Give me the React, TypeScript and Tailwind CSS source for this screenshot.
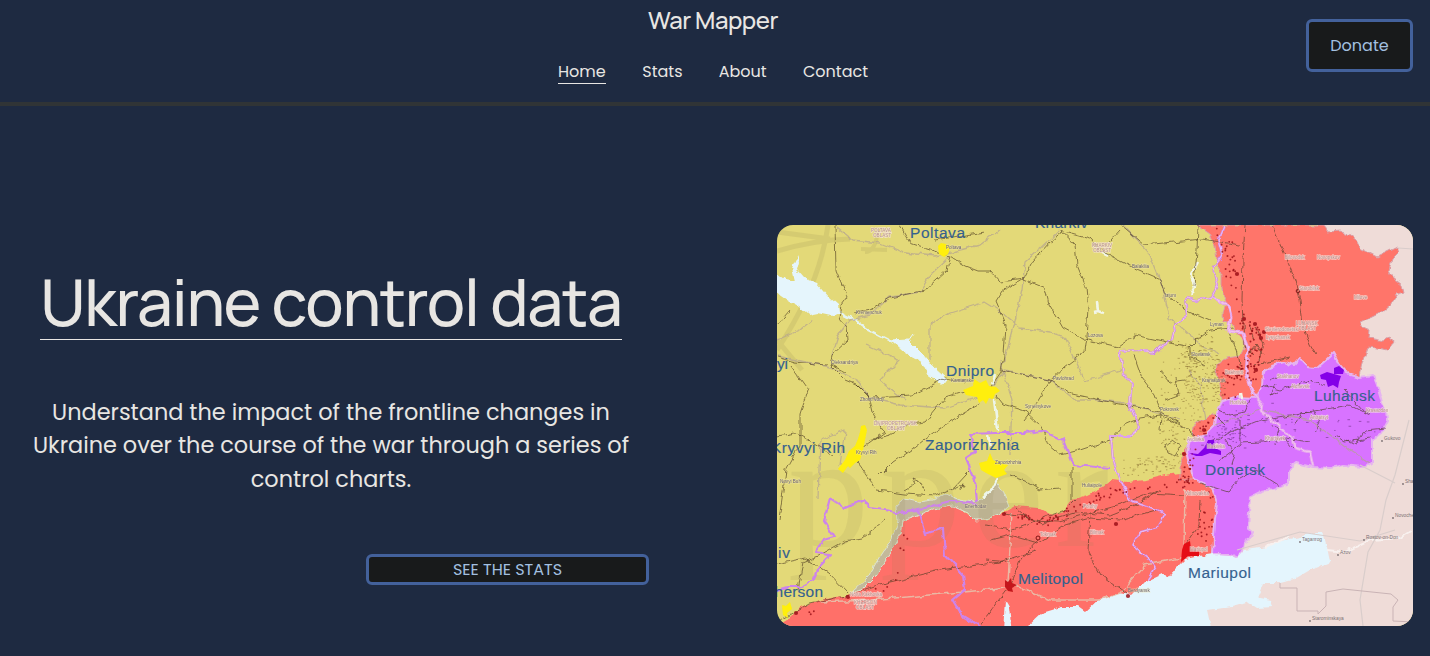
import React from "react";

const BODY = "font-['Poppins','Inter',sans-serif]";
const HEAD = "font-['Manrope','Inter',sans-serif] font-medium";

const NORTH_RED =
  "1197,225 1325,225 1328,232 1340,231 1350,235 1356,240 1360,248 1377,257 1385,253 1397,247 1399,253 1392,260 1389,269 1392,277 1402,285 1404,293 1397,295 1390,305 1382,312 1372,317 1361,322 1363,327 1370,330 1369,338 1383,341 1390,337 1393,342 1387,350 1378,348 1368,347 1363,362 1360,377 1340,385 1262,400 1240,420 1205,480 1180,480 1180,463 1186,450 1192,438 1193,427 1204,419 1217,413 1222,400 1221,384 1216,375 1217,363 1227,358 1240,356 1244,348 1243,340 1236,332 1232,324 1224,322 1223,314 1226,302 1222,290 1222,275 1217,260 1215,246 1210,234";
const SOUTH_RED =
  "1205,425 1193,440 1182,453 1180,473 1165,475 1145,480 1128,482 1112,480 1102,488 1088,495 1072,500 1063,512 1052,515 1038,508 1015,506 1004,512 985,520 970,515 952,505 933,508 917,515 903,519 900,533 890,553 873,577 860,590 847,595 820,600 800,607 787,620 770,630 1040,636 1150,600 1190,565 1215,556 1220,480";
const PURPLE =
  "1263,372 1272,366 1284,362 1294,365 1300,358 1307,367 1317,368 1325,361 1333,353 1339,364 1347,373 1360,377 1373,375 1377,385 1382,402 1387,412 1388,420 1381,433 1372,440 1372,463 1363,467 1343,465 1330,468 1313,467 1297,463 1288,470 1288,485 1277,488 1262,491 1250,497 1248,528 1253,532 1250,539 1244,543 1243,549 1238,558 1230,554 1213,554 1215,520 1217,503 1212,488 1203,483 1194,480 1190,465 1187,452 1190,440 1205,435 1215,425 1218,408 1222,401 1235,397 1257,398 1262,385";
const RUSSIA =
  "1310,215 1325,232 1350,245 1372,266 1380,275 1388,292 1350,322 1345,370 1360,400 1370,440 1350,455 1290,455 1270,475 1240,490 1235,530 1225,540 1200,605 1212,636 1425,636 1425,215";
const SEA =
  "1028,626 1042,613 1062,607 1078,607 1085,612 1098,600 1118,593 1132,595 1145,582 1162,574 1168,578 1176,568 1185,559 1200,556 1213,554 1230,555 1237,558 1245,550 1267,547 1280,541 1300,537 1308,533 1323,533 1327,547 1330,562 1310,570 1293,580 1280,583 1263,583 1257,597 1271,600 1273,607 1257,608 1248,602 1233,607 1207,610 1212,632 1028,632";
const RESERVOIR =
  "995,480 1004,492 1009,506 1000,514 985,519 975,520 968,513 952,506 933,509 917,516 903,521 901,533 890,553 875,577 862,590 852,592 868,577 880,556 892,538 898,522 897,505 905,499 918,502 933,500 945,494 960,500 972,502 982,500 990,492";
const NW_LAKE =
  "770,270 777,273 785,279 795,281 792,268 798,255 799,262 797,270 804,278 817,283 829,297 838,305 839,313 832,316 818,313 808,315 799,307 787,300 770,288";

const DARK_ROADS = [
  "835,225 836,270 847,297 841,305 839,318 847,327 848,340 832,355 830,365 845,380 857,385 870,398 912,396 945,378 965,382",
  "900,225 910,243 940,253 950,256 947,270 925,290 890,298 870,310 855,313",
  "950,256 965,266 978,271 990,271 1000,282 1023,279 1045,288 1049,304 1063,328 1083,339 1118,347",
  "1060,230 1075,244 1077,265 1086,287 1088,310 1086,337 1084,352 1064,367 1050,382 1034,407 1024,420",
  "1120,225 1144,245 1202,239 1240,245",
  "1060,230 1090,238 1104,253 1132,267 1160,279 1165,295 1190,312 1210,321",
  "1120,230 1104,248 M1198,225 1197,250 1194,285",
  "1063,231 1050,242 1032,262 1024,278 1003,291 996,302 1006,325 1004,355 1001,372 990,388",
  "1002,370 1050,380 1072,394 1100,400 1160,412 1180,424",
  "1118,347 1135,335 1190,347 1197,340 1210,330 1233,328",
  "1134,355 1142,378 1155,395 1161,412 1160,432",
  "777,357 795,362 826,365 M791,366 808,390 800,415 800,445 786,470 779,520",
  "857,385 868,395 872,412 885,432 860,450 M830,364 845,372",
  "855,460 877,490 905,494 935,496 955,487 966,475 971,470",
  "869,440 890,435 905,425 925,422 945,398 970,390",
  "880,475 893,462 915,447 930,435 945,425 965,412 980,404",
  "905,490 915,484 912,478 919,481 925,491 M955,488 963,484 960,491",
  "777,436 795,433 815,444 833,455",
  "886,519 862,538 845,541 820,555 803,562 798,590",
  "777,564 805,558 828,572 848,593 M780,620 810,603 850,595 890,582 940,570 1000,562 1036,550",
  "996,395 1003,404 1025,411 1041,426 1048,445 1060,455 1080,450 1110,440 1124,425 1140,418 1160,415",
  "1016,508 1030,520 1060,521 1090,513 1120,505 1150,493 1184,495",
  "985,525 1010,530 1035,521 1065,510 1075,500 M990,540 1010,535 1038,543 1065,525 1090,518 1120,520 1155,510",
  "1005,513 1025,516 1043,524 1055,518 1075,512 1110,515 1135,505 1160,490",
  "1090,511 1088,552 1101,575 1127,594 M1011,585 1020,560 1038,540",
  "985,560 1010,562 M979,626 1008,588 M1200,500 1199,525 1183,549",
  "1272,225 1285,255 1295,280 1300,300 1303,325 1310,345 1316,355",
  "1245,225 1243,260 1242,300 1244,345 1253,355 M1255,365 1290,357",
  "1215,440 1235,430 1260,420 1290,415 1320,410 1350,405 1370,415",
  "1200,483 1228,492 1240,478 1255,470 M1255,470 1280,486 M1240,420 1240,445 1220,460",
  "1262,385 1280,390 1310,380 1325,385 M1345,390 1365,412 1385,410",
  "1240,443 1262,442 1285,438 1310,442 M1275,445 1280,430 1272,425 M1285,440 1292,448",
  "1295,425 1302,413 1315,412 1320,422 1315,432 M1345,440 1355,445 1365,430 1385,428",
  "1225,440 1235,455 1232,465 M1218,410 1230,415 1245,412 1250,400 M1225,425 1215,415",
  "1335,435 1345,442 1358,440 1370,438 M1275,385 1270,395 1278,392 M1270,380 1280,375",
  "777,325 790,310 M935,240 985,232",
  "1190,346 1190,360 M1160,370 1170,382 1185,380 M1188,355 1205,365",
  "1160,415 1185,428 1195,436 M1175,378 1178,395 1165,400",
  "1165,445 1172,440 1180,446 1175,455 1167,452 Z",
  "1244,360 1256,345 1262,355 M1240,370 1236,350 1228,330",
  "1256,326 1264,345 1258,362 M1248,322 1255,340",
  "1010,475 1025,480 1040,490 1060,488 M1072,468 1072,500",
];
const GREY_ROADS = [
  "837,228 852,240 880,243 905,253 935,256 952,252 980,245 1000,230",
  "950,256 930,275 920,292 890,297 870,315 850,320 838,335 832,355",
  "777,356 830,367 857,380 870,398 900,405 945,408 985,395 1005,370",
  "1005,370 1050,380 1075,400 1100,400 1125,403 1180,420",
  "1060,230 1025,262 1022,290 1015,320 1003,365",
  "1123,225 1150,255 1162,285 1170,318 1200,345 1220,355",
  "930,360 930,325 950,313 985,302 998,310 1020,328 1050,332 1065,337 1080,370 1085,381 1095,378 1120,370",
  "777,340 800,330 812,320 M865,345 900,360 880,380 905,400",
  "840,465 845,430 820,440 818,500",
  "1187,370 1200,385 1205,420",
  "1215,425 1260,410 1310,420 1350,450 1370,463",
  "1000,360 1012,400 1010,455",
];
const PALE_ROADS = [
  "985,590 1015,585 1050,600 1100,600 1120,593 1145,565 1190,556",
  "1185,490 1184,545 M1008,582 1012,512",
  "820,602 870,600 930,595 985,590",
];
const PURPLE_BORDERS = [
  "1224,225 1218,240 1222,255 1213,268 1217,285 1212,297 1205,299 1195,300 1186,298 1188,315 1175,325 1172,340 1160,347 1155,352 1145,351 1140,350 1120,351 1123,374 1132,382 1130,405 1138,425 1132,436 1111,436 1113,460 1122,485 1130,500 1150,507 1165,515 1158,527 1140,532 1133,545 1150,560 1155,568 1147,580",
  "1213,297 1228,305 1231,317 1228,331 1243,333 1248,350 1246,373 1253,393 1262,403 1261,411 1275,422 1292,438 1295,448 1310,452 1313,466",
  "977,502 975,480 966,458 975,452 970,434 995,433 1025,433 1042,431 1063,440 1073,465 1110,468",
  "777,590 787,587 800,587 813,580 820,565 830,555 815,553 823,540 834,537 824,520 830,498 845,508 863,500 870,508 898,512 918,510 925,534 943,528 945,555 963,575 965,590 953,600 962,615 980,626",
  "898,512 925,508 950,501 977,504",
];

const YELLOW_CITIES = [
  "938,246 941,243 946,244 950,248 948,254 944,257 939,254",
  "963,390 973,386 974,379 980,383 986,380 989,386 996,387 1000,391 995,394 993,399 989,398 986,404 983,400 979,403 977,397 966,395",
  "860,432 861,426 865,425 867,430 865,440 863,450 860,460 855,463 850,468 848,466 843,473 838,469 845,460 849,451 855,446 858,439",
  "979,463 987,461 990,453 993,460 1000,463 1008,465 1004,470 1007,474 996,478 988,474 981,470",
  "782,605 786,606 790,602 792,609 787,613 788,618 783,615",
];

const LABELS: [string, number, number, number][] = [
  ["Poltava", 910, 238, 55],
  ["Kharkiv", 1035, 228, 53],
  ["Dnipro", 946, 376, 48],
  ["Kryvyi Rih", 771, 453, 74],
  ["Zaporizhzhia", 925, 450, 94],
  ["Luhansk", 1314, 401, 61],
  ["Donetsk", 1205, 475, 60],
  ["Melitopol", 1018, 584, 65],
  ["Mariupol", 1188, 578, 63],
  ["Kherson", 764, 597, 59],
  ["yi", 777, 369, 11],
  ["iv", 778, 558, 12],
];

const DARK_TOWNS: [string, number, number][] = [
  ["Poltava", 946, 249], ["Kremenchuk", 856, 314], ["Oleksandriya", 831, 364], ["Zhovti Vody", 860, 401],
  ["Kamianske", 951, 382], ["Pavlohrad", 1053, 380], ["Lozova", 1088, 337], ["Izium", 1165, 297],
  ["Balakliia", 1132, 268], ["Synelnykove", 1025, 408], ["Kryvyi Rih", 856, 454], ["Pokrovsk", 1160, 411],
  ["Huliaipole", 1082, 487], ["Novyi Buh", 780, 483], ["Enerhodar", 965, 508], ["Berdyansk", 1128, 592],
  ["Kramatorsk", 1202, 382], ["Sloviansk", 1191, 356], ["Lyman", 1210, 326], ["Zaporizhzhia", 995, 464],
];
const PALE_TOWNS: [string, number, number][] = [
  ["POLTAVA", 871, 232], ["OBLAST", 873, 237], ["KHARKIV", 1092, 247], ["OBLAST", 1093, 252],
  ["DNIPROPETROVSK", 874, 425], ["OBLAST", 887, 430], ["LUHANSK", 1296, 325], ["OBLAST", 1298, 330],
  ["KHERSON", 854, 604], ["OBLAST", 856, 609], ["Sievierodonetsk", 1265, 331], ["Lysychansk", 1266, 339],
  ["Bilovodsk", 1285, 259], ["Novopskov", 1317, 259], ["Starobilsk", 1299, 290], ["Milove", 1354, 299],
  ["Alchevsk", 1291, 388], ["Stakhanov", 1277, 378], ["Krasnodon", 1366, 412], ["Horlivka", 1230, 404],
  ["Bakhmut", 1225, 374], ["Polohy", 1083, 508], ["Tokmak", 1040, 536], ["Volnovakha", 1185, 495],
  ["Makiivka", 1207, 448], ["Khartsyzk", 1265, 440], ["Mariupol", 1190, 551], ["Bilmak", 1090, 534],
  ["Avdiivka", 1187, 441], ["Antratsyt", 1310, 419], ["Nova Kakhovka", 850, 596],
];
const RUSSIAN_TOWNS: [string, number, number][] = [
  ["Taganrog", 1302, 541], ["Azov", 1340, 554], ["Rostov-on-Don", 1366, 539],
  ["Novoche", 1395, 517], ["Sha", 1405, 483], ["Gukovo", 1384, 440], ["Starominskaya", 1312, 620],
];

function scatter(seed: number, n: number, line: number[][], spread: number) {
  let s = seed * 7919;
  const rnd = () => {
    s = (s + 0x6d2b79f5) | 0;
    let t = Math.imul(s ^ (s >>> 15), 1 | s);
    t = (t + Math.imul(t ^ (t >>> 7), 61 | t)) ^ t;
    return ((t ^ (t >>> 14)) >>> 0) / 4294967296;
  };
  return Array.from({ length: n }, () => {
    const i = Math.floor(rnd() * (line.length - 1));
    const t = rnd();
    const a = line[i];
    const b = line[i + 1];
    return [
      a[0] + (b[0] - a[0]) * t + (rnd() - 0.5) * spread,
      a[1] + (b[1] - a[1]) * t + (rnd() - 0.5) * spread,
    ];
  });
}
const FRONT_DOTS = [
  ...scatter(11, 36, [[1222, 228], [1230, 270], [1236, 310], [1250, 335]], 14),
  ...scatter(23, 70, [[1254, 325], [1254, 375], [1230, 370], [1230, 395]], 15),
  ...scatter(29, 22, [[1215, 418], [1202, 430], [1190, 458], [1186, 475]], 8),
  ...scatter(37, 75, [[1192, 480], [1180, 484], [1110, 492], [1078, 507], [1050, 522], [1015, 513]], 9),
  ...scatter(51, 18, [[1205, 490], [1205, 545]], 16),
  ...scatter(67, 14, [[800, 614], [870, 598], [893, 580], [908, 535]], 8),
];
const STEPPE_DOTS = [
  ...scatter(83, 200, [[1195, 345], [1200, 370], [1208, 395]], 36),
  ...scatter(85, 110, [[1180, 365], [1185, 420], [1160, 455]], 44),
  ...scatter(87, 60, [[1130, 468], [1175, 460]], 18),
];
const DONBAS_DOTS = [
  ...scatter(91, 70, [[1208, 445], [1225, 432], [1240, 415], [1235, 445]], 18),
  ...scatter(97, 30, [[1255, 412], [1330, 430], [1370, 430]], 22),
];

const toPath = (p: string) =>
  p.split(" M").map((q) => "M" + q.replace(/^M/, "")).join(" ");

function ControlMap() {
  return (
    <svg
      viewBox="777 225 636 401"
      className="block h-[401px] w-[636px] rounded-[16px]"
      fontFamily="'Liberation Sans', Arial, sans-serif"
      aria-label="Control map"
    >
      <defs>
        <filter id="rough" filterUnits="userSpaceOnUse" x="767" y="215" width="656" height="421">
          <feTurbulence type="fractalNoise" baseFrequency="0.12" numOctaves="2" seed="4" result="n" />
          <feDisplacementMap in="SourceGraphic" in2="n" scale="6" xChannelSelector="R" yChannelSelector="G" />
          <feGaussianBlur stdDeviation="0.45" />
        </filter>
        <filter id="soft" filterUnits="userSpaceOnUse" x="767" y="215" width="656" height="421">
          <feGaussianBlur stdDeviation="0.4" />
        </filter>
      </defs>
      <rect x="777" y="225" width="636" height="401" fill="#e3d978" />
      <g fill="none" stroke="#cbbf6c" strokeOpacity=".55">
        <path d="M777 251 Q815 240 850 239 M777 232 L830 239 M828 225 Q820 285 777 350 M777 340 L802 370" strokeWidth="5" />
        <path d="M878 229 Q876 252 865 252 M861 249 L887 250" strokeWidth="4" />
      </g>
      <g filter="url(#rough)" strokeLinejoin="round">
        <polygon points={SOUTH_RED} fill="#ff7069" />
        <polygon points={RUSSIA} fill="#efdcd8" />
        <polygon points={NORTH_RED} fill="#ff746b" stroke="#d8a0a8" strokeWidth="1" />
        <polygon points={PURPLE} fill="#d873ff" stroke="#e6b4f0" strokeWidth="2" />
        <polygon points={RESERVOIR} fill="#c3b99a" stroke="#dbe3cf" strokeWidth="1" />
      </g>
      <text x="788" y="546" fontFamily="'Liberation Serif', serif" fontSize="162" letterSpacing="11" fill="#8b8550" fillOpacity=".12">pper</text>
      <g filter="url(#rough)">
        <polygon points={SEA} fill="#e4f5fd" />
        <path d="M1003 632L1005 600L1009 607L1012 632Z" fill="#e4f5fd" />
        <polygon points={NW_LAKE} fill="#e5f5fc" />
        <path d="M839 312L855 320L869 330L890 341L910 350L923 359L932 372L943 383" fill="none" stroke="#e5f3ef" strokeWidth="2.5" />
        <path d="M892 341L908 340L922 354L933 367L946 379L942 384L929 375L921 361L904 352Z M908 341L913 334" fill="#e5f5fc" stroke="#e5f5fc" />
        <path d="M995 375L992 384 M994 400L996 415L998 430 M988 435L991 446 M997 478L991 490L982 498" fill="none" stroke="#edf5ea" strokeWidth="2.5" />
        <path d="M1198 262L1191 275L1195 287L1190 296 M1097 302L1098 311L1094 312 M1098 311L1103 313 M1101 253L1107 256 M1241 393L1242 399" fill="none" stroke="#f2f6e8" strokeWidth="2.5" />
        <path d="M1265 548L1290 536 M1327 550L1345 552L1370 540L1400 538L1412 530" fill="none" stroke="#f8f1ef" strokeWidth="2" />
      </g>
      <path
        d="M1409 420L1395 475L1386 500L1380 530L1368 552L1360 600L1363 626 M1360 465L1395 483 M1237 550L1300 532L1360 541L1395 530 M1398 248L1413 249"
        fill="none" stroke="#d9cdcb" strokeWidth="1.2"
      />
      <path d="M1280 583V588H1297V611H1318V614L1326 606V592L1343 589L1391 594L1398 600L1393 607V621L1413 622" fill="none" stroke="#c9b3b5" strokeWidth="1" />
      <g filter="url(#rough)" fill="none" strokeLinejoin="round">
        <g stroke="#b3a391" strokeOpacity=".7" strokeWidth="1.3">
          {GREY_ROADS.map((d) => <path key={d} d={toPath(d)} />)}
        </g>
        <g stroke="#eab8a4" strokeWidth="1.4">
          {PALE_ROADS.map((d) => <path key={d} d={toPath(d)} />)}
        </g>
        <g stroke="#4c3a22" strokeOpacity=".62" strokeWidth="1">
          {DARK_ROADS.map((d) => <path key={d} d={toPath(d)} />)}
        </g>
        <g stroke="#cd84ea" strokeWidth="2.2">
          {PURPLE_BORDERS.map((d) => <path key={d} d={toPath(d)} />)}
        </g>
        <g stroke="#e7a8ee" strokeWidth="3">
          <path d={toPath(PURPLE_BORDERS[1])} />
        </g>
        <g stroke="#f6d0ee" strokeWidth=".8">
          {PURPLE_BORDERS.slice(0, 2).map((d) => <path key={d} d={toPath(d)} />)}
        </g>
      </g>
      <g fill="#7a5c28" fillOpacity=".5">
        {STEPPE_DOTS.map(([x, y], i) => <rect key={i} x={x} y={y} width={i % 3 ? 1.2 : 2.2} height=".9" />)}
      </g>
      <g fill="#6d2f86" fillOpacity=".65">
        {DONBAS_DOTS.map(([x, y], i) => <rect key={i} x={x} y={y} width={i % 3 ? 1.3 : 2.6} height=".9" />)}
      </g>
      <g fill="#9c1218" fillOpacity=".85" filter="url(#soft)">
        {FRONT_DOTS.map(([x, y], i) => <circle key={i} cx={x} cy={y} r=".95" />)}
        {[[1237, 274], [1244, 319], [1255, 324], [1264, 332], [1261, 338], [1256, 370], [1184, 454], [1204, 430], [1116, 524], [1004, 514], [796, 613], [848, 597], [1128, 596]].map(([x, y]) => (
          <circle key={x} cx={x} cy={y} r="2.1" />
        ))}
        <circle cx="1298" cy="291" r="1.8" fill="none" stroke="#7d1515" />
        <circle cx="1038" cy="538" r="2" fill="none" stroke="#7d1515" />
      </g>
      <g filter="url(#soft)">
        <g fill="#ffef0a">
          {YELLOW_CITIES.map((p) => <polygon key={p} points={p} />)}
        </g>
        <g fill="#8405e8">
          <path d="M1320 375L1327 372L1334 374L1341 376L1339 382L1338 388L1333 385L1328 387L1326 380L1321 379Z M1334 368L1339 366L1344 370L1343 374L1334 374Z" />
          <path d="M1189 453L1198 454L1205 447L1208 440L1214 440L1215 448L1221 451L1221 455L1210 453L1202 456L1196 456Z" />
        </g>
        <path d="M1184 544L1190 541L1191 549L1199 551L1199 556L1188 556L1181 562L1182 550Z" fill="#e50c12" />
        <path d="M1005 580L1008 582L1011 578L1012 583L1017 585L1012 588L1013 592L1008 591L1005 587Z" fill="#c5171c" />
      </g>
      <g filter="url(#soft)" fontSize="4.6">
        <g fill="#6a6172" stroke="#f1e7b5" strokeOpacity=".5" strokeWidth="1" paintOrder="stroke">
          {DARK_TOWNS.map(([t, x, y]) => <text key={t} x={x} y={y}>{t}</text>)}
        </g>
        <g fill="#b8928e" stroke="#f6e6df" strokeOpacity=".7" strokeWidth="1.3" paintOrder="stroke">
          {PALE_TOWNS.map(([t, x, y]) => <text key={t + y} x={x} y={y}>{t}</text>)}
        </g>
      </g>
      <g fontSize="4.8" fill="#7b7073">
        {RUSSIAN_TOWNS.map(([t, x, y]) => (
          <g key={t}>
            <text x={x} y={y}>{t}</text>
            <circle cx={x - 2} cy={y + 1} r=".9" />
          </g>
        ))}
      </g>
      <g fontSize="15.5" fill="#35618f">
        {LABELS.map(([t, x, y, w]) => (
          <text key={t} x={x} y={y} textLength={w} stroke="#35618f" strokeWidth=".15">{t}</text>
        ))}
      </g>
    </svg>
  );
}

export default function App() {
  return (
    <div className={`h-[656px] w-full overflow-hidden bg-[#1e2a41] text-[#e8e6e3] ${BODY}`}>
      <header className="grid h-[106px] grid-cols-[1fr_310px_1fr] border-b-4 border-[#303436] pr-[17px] pl-[13px]">
        <div />
        <div className="flex flex-col items-center">
          <div className={`mt-[4px] h-[32px] whitespace-nowrap text-[24px] leading-[32px] tracking-[-0.02em] ${HEAD}`}>War Mapper</div>
          <nav className="mt-[24px] flex w-full justify-between whitespace-nowrap text-base">
            <a className="h-[24px] w-[48px] border-b border-[#e8e6e3]">Home</a>
            <a className="w-[40px]">Stats</a>
            <a className="w-[48px]">About</a>
            <a className="w-[65px]">Contact</a>
          </nav>
        </div>
        <div className="flex justify-end pt-[19px]">
          <button className="h-[53px] w-[107px] rounded-[6px] border-3 border-[#43619b] bg-[#181a1b] text-base text-[#a3c0e0]">Donate</button>
        </div>
      </header>
      <main className="flex justify-between pr-[17px] pl-[13px]">
        <section className="flex w-[636px] flex-col items-center pt-[158px]">
          <h1 className={`h-[76px] w-[582px] whitespace-nowrap border-b border-[#e8e6e3] text-center text-[64px] leading-[76px] tracking-[-0.02em] ${HEAD}`}>Ukraine control data</h1>
          <p className="mt-[55.6px] whitespace-nowrap text-center text-[22.4px] leading-[33.6px]">
            Understand the impact of the frontline changes in
            <br />
            Ukraine over the course of the war through a series of
            <br />
            control charts.
          </p>
          <button className="mt-[57.6px] h-[31px] w-[283px] self-end rounded-[6px] border-3 border-[#43619b] bg-[#181a1b] text-base leading-[25px] text-[#a3c0e0]">SEE THE STATS</button>
        </section>
        <div className="pt-[119px]">
          <ControlMap />
        </div>
      </main>
    </div>
  );
}
